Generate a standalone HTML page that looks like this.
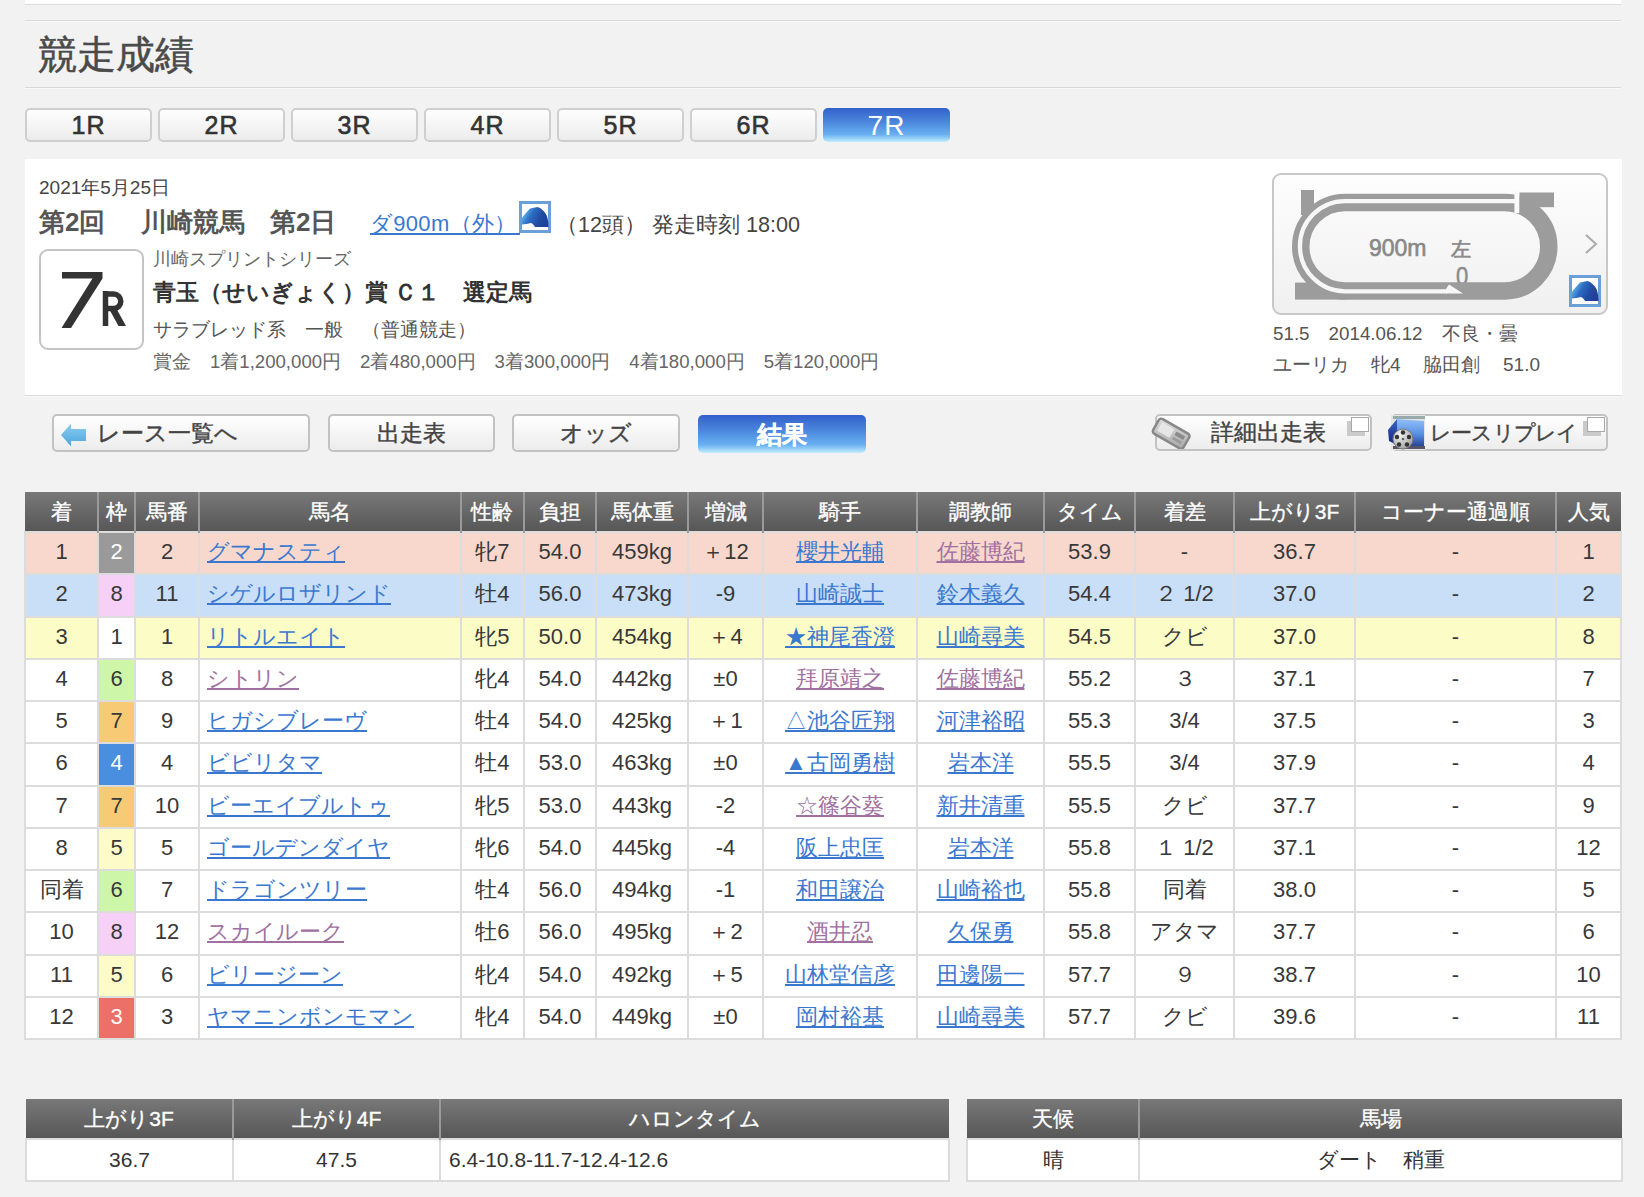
<!DOCTYPE html>
<html lang="ja">
<head>
<meta charset="utf-8">
<style>
*{box-sizing:border-box;margin:0;padding:0}
html,body{width:1644px;height:1197px;overflow:hidden;background:#f2f2f2;font-family:"Liberation Sans",sans-serif;color:#333}
.abs{position:absolute}
a{color:#3a78d0;text-decoration:underline}
a.v{color:#a070a0}
#topstrip{left:25px;top:0;width:1596px;height:5px;background:#fff;border-bottom:1px solid #dcdcdc}
#hdr{left:25px;top:20px;width:1596px;height:68px;border-top:1px solid #d8d8d8;border-bottom:1px solid #d8d8d8;box-shadow:inset 0 1px 0 #fafafa,0 1px 0 #fafafa}
#hdr h1{position:absolute;left:13px;top:10px;font-size:39px;font-weight:normal;color:#4a4a4a;line-height:48px;-webkit-text-stroke:0.5px #4a4a4a}
.rb{position:absolute;top:108px;width:127px;height:34px;border:2px solid #cfcfcf;border-radius:5px;background:linear-gradient(#fefefe,#ececec);font-size:25px;font-weight:normal;color:#333;text-align:center;line-height:31px;-webkit-text-stroke:0.6px #333;letter-spacing:1px}
.rb.on{background:linear-gradient(#3360cc 0%,#4a86dc 40%,#68b0f2 78%,#c4eefc 100%);border:none;color:#fff;font-weight:normal;line-height:35px;-webkit-text-stroke:0}
#panel{left:25px;top:159px;width:1597px;height:237px;background:#fff;border-bottom:1px solid #dcdcdc;box-shadow:0 1px 0 #f8f8f8}

.t{position:absolute;white-space:nowrap}
#date{left:39px;top:175.5px;font-size:19px;color:#444;line-height:24px}
#kai{left:39px;top:205px;font-size:26px;font-weight:bold;color:#555;line-height:34px;width:400px;height:34px}
#kai span{position:absolute;top:0}
#dist{left:370px;top:209px;font-size:22px;line-height:30px}
#dist a{color:#3a78d0}
#tou{left:556px;top:210px;font-size:21.6px;color:#444;line-height:30px}
#box7{left:39px;top:249px;width:105px;height:101px;border:2px solid #c4c4c4;border-radius:9px;background:#fff}
#box7 .n{position:absolute;left:17px;top:9px;font-size:78px;line-height:80px;color:#333;-webkit-text-stroke:1px #333}
#box7 .r{position:absolute;left:62px;top:34px;font-size:47px;line-height:50px;color:#333;transform:scaleX(0.8);transform-origin:0 0;-webkit-text-stroke:0.5px #333}
#series{left:153px;top:246.5px;font-size:18px;color:#666;line-height:24px}
#rname{left:153px;top:276.5px;font-size:23px;font-weight:bold;color:#333;line-height:30px}
#rtype{left:153px;top:317px;font-size:18.7px;color:#555;line-height:26px}
#prize{left:153px;top:349.5px;font-size:18.6px;color:#666;line-height:24px}
#course{left:1272px;top:173px;width:336px;height:142px;border:2px solid #c8c8c8;border-radius:9px;background:linear-gradient(#fdfdfd,#f0f0f0)}
#rec1{left:1273px;top:321px;font-size:18.8px;color:#555;line-height:26px}
#rec2{left:1273px;top:351.5px;font-size:19px;word-spacing:0;color:#555;line-height:26px}

.btn{position:absolute;top:414px;height:38px;border:2px solid #c2c2c2;border-radius:5px;background:linear-gradient(#ffffff,#ececec);font-size:23px;color:#444;text-align:center;line-height:34px;white-space:nowrap;-webkit-text-stroke:0.4px #444}
.btn.on{border:none;top:415px;height:37.5px;background:linear-gradient(#3360cc 0%,#4a86dc 40%,#68b0f2 78%,#c4eefc 100%);color:#fff;font-weight:bold;font-size:25px;line-height:38px;-webkit-text-stroke:0.3px #fff}
.extico{position:absolute;top:1px;width:18px;height:15px;border:1.5px solid #a8a8a8;background:#fff;box-shadow:-4px 4px 0 #cacaca}
table.res{position:absolute;left:24px;top:492px;border-collapse:collapse;table-layout:fixed;width:1596px;font-size:22px;color:#333}
table.res th{height:39px;background:linear-gradient(#787878,#575757);color:#fff;font-weight:normal;border-left:2px solid #9a9a9a;font-size:21px;padding:0;line-height:39px;-webkit-text-stroke:0.35px #fff}
table.res th:first-child{border-left:none}
table.res td{height:42.25px;border:2px solid #dcdcdc;background:#fff;text-align:center;padding:0 0 2px 0;white-space:nowrap;line-height:36px;color:#383838}
table.res td.nm{text-align:left;padding-left:7px;font-size:21.5px}
tr.r1 td{background:#f8d8cd}
tr.r2 td{background:#c9def7}
tr.r3 td{background:#fcfcc7}
table.res tr td.w{color:#333}
.w1{background:#fff !important}
.w2{background:#9a9a9a !important;color:#fff !important}
.w3{background:#ec6f68 !important;color:#fff !important}
.w4{background:#4a8ee0 !important;color:#fff !important}
.w5{background:#fdfcc8 !important}
.w6{background:#cdf6a8 !important}
.w7{background:#f7ca76 !important}
.w8{background:#f6d0f6 !important}

table.sm{position:absolute;top:1099px;border-collapse:collapse;table-layout:fixed;font-size:21px;color:#333}
table.sm th{height:39px;background:linear-gradient(#787878,#575757);color:#fff;font-weight:normal;border-left:2px solid #9a9a9a;padding:0;line-height:39px;-webkit-text-stroke:0.35px #fff}
table.sm th:first-child{border-left:none}
table.sm td{height:42px;border:2px solid #dcdcdc;background:#fff;text-align:center;padding:0;line-height:40px;white-space:nowrap}
</style>
</head>
<body>
<div id="topstrip" class="abs"></div>
<div id="hdr" class="abs"><h1>競走成績</h1></div>
<div class="rb" style="left:25px">1R</div>
<div class="rb" style="left:158px">2R</div>
<div class="rb" style="left:291px">3R</div>
<div class="rb" style="left:424px">4R</div>
<div class="rb" style="left:557px">5R</div>
<div class="rb" style="left:690px">6R</div>
<div class="rb on" style="left:823px;font-size:28px">7R</div>
<div id="panel" class="abs"></div>

<div id="date" class="t">2021年5月25日</div>
<div id="kai" class="t"><span style="left:0">第2回</span><span style="left:102px">川崎競馬</span><span style="left:231px">第2日</span></div>
<div id="dist" class="t"><a style="letter-spacing:0.3px;text-decoration:none">ダ900m（外）</a></div>
<div class="abs" style="left:370px;top:233px;width:150px;height:2px;background:#3a78d0"></div><div class="abs" style="left:519px;top:201px;width:32px;height:32px"><svg width="32" height="32" viewBox="0 0 32 32"><defs><linearGradient id="hg" x1="0" y1="0.3" x2="1" y2="0.7"><stop offset="0" stop-color="#6cc4f0"/><stop offset="0.35" stop-color="#2d6cc4"/><stop offset="0.7" stop-color="#1f4aa0"/><stop offset="1" stop-color="#223e98"/></linearGradient></defs><rect x="1.5" y="1.5" width="29" height="29" fill="#fff" stroke="#6a9fd8" stroke-width="3"/><path d="M2.5 17.5 C5 14, 8 11, 11 7.5 L18.5 6 C22 7, 25.5 10, 27.5 14 C29 18, 29.5 22, 29.5 26 L16 26 C15 24.5, 14 22.5, 12 22 C9 22.5, 6 23.5, 2.5 23.5 Z" fill="url(#hg)"/></svg></div>
<div id="tou" class="t">（12頭）&nbsp;発走時刻 18:00</div>
<div id="box7" class="abs"></div><svg class="abs" style="left:0;top:0" width="200" height="400" viewBox="0 0 200 400"><path d="M62 272 L102.5 272 L102.5 278.5 L71 328 L61.5 328 L92.5 278.5 L62 278.5 Z" fill="#333"/><path d="M105.5 291 V326" stroke="#333" stroke-width="5.5" fill="none"/><path d="M103 294 H113.5 A7.3 7.3 0 0 1 113.5 308.6 H103" stroke="#333" stroke-width="5.5" fill="none"/><path d="M108 307 L115.5 307 L126 326 L118.5 326 Z" fill="#333"/></svg>
<div id="series" class="t">川崎スプリントシリーズ</div>
<div id="rname" class="t">青玉（せいぎょく）賞 Ｃ１　選定馬</div>
<div id="rtype" class="t">サラブレッド系　一般　（普通競走）</div>
<div id="prize" class="t">賞金　1着1,200,000円　2着480,000円　3着300,000円　4着180,000円　5着120,000円</div>
<div id="course" class="abs"></div><svg class="abs" style="left:1272px;top:173px" width="336" height="142" viewBox="1272 173 336 142">
<rect x="1295" y="282.6" width="50" height="17" fill="#9c9c9c"/>
<rect x="1301" y="190" width="13" height="25" fill="#9c9c9c"/>
<rect x="1519.3" y="192.5" width="34.7" height="14.7" fill="#9c9c9c"/>
<text x="1456" y="285" font-size="26" fill="#8a8a8a" stroke="#8a8a8a" stroke-width="0.5" font-family="Liberation Sans" transform="translate(1456 0) scale(0.85 1) translate(-1456 0)">0</text>
<path d="M1345 202.45 L1504.5 202.45 A44.25 44.25 0 0 1 1504.5 290.95 L1345 290.95 A44.25 44.25 0 0 1 1345 202.45 Z" fill="none" stroke="#9c9c9c" stroke-width="17.5"/>
<path d="M1517 201.1 L1345 201.1 A45.1 45.1 0 0 0 1345 291.3 L1447 291.3" fill="none" stroke="#f7f7f7" stroke-width="4.3"/>
<path d="M1446 289 L1449 284.5 L1463 293.6 L1446 293.6 Z" fill="#f7f7f7"/>
<rect x="1514.4" y="190" width="4.9" height="23" fill="#f9f9f9"/>
<text x="1369" y="255.5" font-size="23" fill="#888" stroke="#888" stroke-width="0.6" font-family="Liberation Sans">900m</text>
<text x="1451" y="256" font-size="20" fill="#888" stroke="#888" stroke-width="0.6" font-family="Liberation Sans">左</text>
<path d="M1586 235 L1596 244 L1586 253" fill="none" stroke="#aaa" stroke-width="2"/>
</svg>
<div class="abs" style="left:1569px;top:275px;width:32px;height:32px"><svg width="32" height="32" viewBox="0 0 32 32"><defs><linearGradient id="hg2" x1="0" y1="0.3" x2="1" y2="0.7"><stop offset="0" stop-color="#6cc4f0"/><stop offset="0.35" stop-color="#2d6cc4"/><stop offset="0.7" stop-color="#1f4aa0"/><stop offset="1" stop-color="#223e98"/></linearGradient></defs><rect x="1.5" y="1.5" width="29" height="29" fill="#fff" stroke="#6a9fd8" stroke-width="3"/><path d="M2.5 17.5 C5 14, 8 11, 11 7.5 L18.5 6 C22 7, 25.5 10, 27.5 14 C29 18, 29.5 22, 29.5 26 L16 26 C15 24.5, 14 22.5, 12 22 C9 22.5, 6 23.5, 2.5 23.5 Z" fill="url(#hg2)"/></svg></div>

<div id="rec1" class="t">51.5　2014.06.12　不良・曇</div>
<div id="rec2" class="t" style="width:300px;height:26px"><span class="abs" style="left:0">ユーリカ</span><span class="abs" style="left:98px">牝4</span><span class="abs" style="left:150px">脇田創</span><span class="abs" style="left:230px">51.0</span></div>

<div class="btn" style="left:52px;width:258px;text-align:left;padding-left:43px"><svg class="abs" style="left:6px;top:6px" width="28" height="26" viewBox="0 0 28 26"><defs><linearGradient id="ag" x1="0" y1="0" x2="0" y2="1"><stop offset="0" stop-color="#8ccdf0"/><stop offset="1" stop-color="#4aa6dc"/></linearGradient></defs><path d="M1 13 L11 1.5 L11 7 L26 7 L26 19 L11 19 L11 24.5 Z" fill="url(#ag)"/></svg>レース一覧へ</div>
<div class="btn" style="left:328px;width:167px">出走表</div>
<div class="btn" style="left:512px;width:168px">オッズ</div>
<div class="btn on" style="left:698px;width:168px">結果</div>
<div class="btn" style="left:1155px;width:217px;top:414px;height:37px;text-align:left;padding-left:54px;font-size:22.5px"><svg class="abs" style="left:-6px;top:1px" width="44" height="32" viewBox="0 0 44 32"><defs><linearGradient id="ng" x1="0" y1="0" x2="1" y2="1"><stop offset="0" stop-color="#dedede"/><stop offset="1" stop-color="#a8a8a8"/></linearGradient></defs><g transform="rotate(30 20 16)"><rect x="3" y="8" width="35" height="17" rx="3" fill="url(#ng)" stroke="#888" stroke-width="2.5"/><rect x="7" y="11" width="14" height="10" fill="#e6e6e6"/><rect x="24" y="12" width="10" height="4" fill="#8a8a8a"/><rect x="24" y="18" width="10" height="3" fill="#9a9a9a"/></g></svg>詳細出走表<span class="extico" style="left:194px"></span></div>
<div class="btn" style="left:1391px;width:217px;top:414px;height:37px;text-align:left;padding-left:37px;font-size:20.5px;letter-spacing:-0.8px"><svg class="abs" style="left:-6px;top:-2px" width="40" height="38" viewBox="0 0 40 38"><defs><linearGradient id="fg" x1="0" y1="0" x2="0" y2="1"><stop offset="0" stop-color="#90c0f8"/><stop offset="0.55" stop-color="#5a90e4"/><stop offset="1" stop-color="#26449a"/></linearGradient><linearGradient id="fg2" x1="0" y1="0" x2="0" y2="1"><stop offset="0" stop-color="#3a64c8"/><stop offset="1" stop-color="#16247a"/></linearGradient><radialGradient id="rg" cx="0.35" cy="0.3" r="0.8"><stop offset="0" stop-color="#f4f4f4"/><stop offset="1" stop-color="#9a9a9a"/></radialGradient></defs><rect x="4" y="1" width="34" height="35" fill="#e4e4e4"/><rect x="6" y="2" width="32" height="3" fill="#9aa"/><rect x="6" y="32" width="32" height="3" fill="#556"/><path d="M10 5 L37 7 L37 32 L10 32 Z" fill="url(#fg)"/><path d="M1 16 L10 5 L10 31 L2 27 Z" fill="url(#fg2)"/><circle cx="16" cy="25" r="10" fill="url(#rg)" stroke="#777" stroke-width="1"/><circle cx="16" cy="18.5" r="2.2" fill="#333"/><circle cx="22" cy="23" r="2.2" fill="#333"/><circle cx="20" cy="30.5" r="2.2" fill="#333"/><circle cx="12" cy="30.5" r="2.2" fill="#333"/><circle cx="10" cy="23" r="2.2" fill="#333"/><circle cx="16" cy="25" r="1.3" fill="#666"/></svg>レースリプレイ<span class="extico" style="left:194px"></span></div>
<table class="res"><colgroup><col style="width:73px"><col style="width:37px"><col style="width:64px"><col style="width:261.5px"><col style="width:63.5px"><col style="width:72px"><col style="width:92px"><col style="width:75px"><col style="width:154px"><col style="width:127px"><col style="width:91px"><col style="width:99px"><col style="width:121px"><col style="width:201px"><col style="width:65px"></colgroup><tr><th>着</th><th>枠</th><th>馬番</th><th>馬名</th><th>性齢</th><th>負担</th><th>馬体重</th><th>増減</th><th>騎手</th><th>調教師</th><th>タイム</th><th>着差</th><th>上がり3F</th><th>コーナー通過順</th><th>人気</th></tr>
<tr class="r1"><td>1</td><td class="w2">2</td><td>2</td><td class="nm"><a class="">グマナスティ</a></td><td>牝7</td><td>54.0</td><td>459kg</td><td>＋12</td><td><a class="">櫻井光輔</a></td><td><a class="v">佐藤博紀</a></td><td>53.9</td><td>-</td><td>36.7</td><td>-</td><td>1</td></tr>
<tr class="r2"><td>2</td><td class="w8">8</td><td>11</td><td class="nm"><a class="">シゲルロザリンド</a></td><td>牡4</td><td>56.0</td><td>473kg</td><td>-9</td><td><a class="">山崎誠士</a></td><td><a class="">鈴木義久</a></td><td>54.4</td><td>２ 1/2</td><td>37.0</td><td>-</td><td>2</td></tr>
<tr class="r3"><td>3</td><td class="w1">1</td><td>1</td><td class="nm"><a class="">リトルエイト</a></td><td>牝5</td><td>50.0</td><td>454kg</td><td>＋4</td><td><a class="">★神尾香澄</a></td><td><a class="">山崎尋美</a></td><td>54.5</td><td>クビ</td><td>37.0</td><td>-</td><td>8</td></tr>
<tr class=""><td>4</td><td class="w6">6</td><td>8</td><td class="nm"><a class="v">シトリン</a></td><td>牝4</td><td>54.0</td><td>442kg</td><td>±0</td><td><a class="v">拜原靖之</a></td><td><a class="v">佐藤博紀</a></td><td>55.2</td><td>３</td><td>37.1</td><td>-</td><td>7</td></tr>
<tr class=""><td>5</td><td class="w7">7</td><td>9</td><td class="nm"><a class="">ヒガシブレーヴ</a></td><td>牡4</td><td>54.0</td><td>425kg</td><td>＋1</td><td><a class="">△池谷匠翔</a></td><td><a class="">河津裕昭</a></td><td>55.3</td><td>3/4</td><td>37.5</td><td>-</td><td>3</td></tr>
<tr class=""><td>6</td><td class="w4">4</td><td>4</td><td class="nm"><a class="">ビビリタマ</a></td><td>牡4</td><td>53.0</td><td>463kg</td><td>±0</td><td><a class="">▲古岡勇樹</a></td><td><a class="">岩本洋</a></td><td>55.5</td><td>3/4</td><td>37.9</td><td>-</td><td>4</td></tr>
<tr class=""><td>7</td><td class="w7">7</td><td>10</td><td class="nm"><a class="">ビーエイブルトゥ</a></td><td>牝5</td><td>53.0</td><td>443kg</td><td>-2</td><td><a class="v">☆篠谷葵</a></td><td><a class="">新井清重</a></td><td>55.5</td><td>クビ</td><td>37.7</td><td>-</td><td>9</td></tr>
<tr class=""><td>8</td><td class="w5">5</td><td>5</td><td class="nm"><a class="">ゴールデンダイヤ</a></td><td>牝6</td><td>54.0</td><td>445kg</td><td>-4</td><td><a class="">阪上忠匡</a></td><td><a class="">岩本洋</a></td><td>55.8</td><td>１ 1/2</td><td>37.1</td><td>-</td><td>12</td></tr>
<tr class=""><td>同着</td><td class="w6">6</td><td>7</td><td class="nm"><a class="">ドラゴンツリー</a></td><td>牡4</td><td>56.0</td><td>494kg</td><td>-1</td><td><a class="">和田譲治</a></td><td><a class="">山崎裕也</a></td><td>55.8</td><td>同着</td><td>38.0</td><td>-</td><td>5</td></tr>
<tr class=""><td>10</td><td class="w8">8</td><td>12</td><td class="nm"><a class="v">スカイルーク</a></td><td>牡6</td><td>56.0</td><td>495kg</td><td>＋2</td><td><a class="v">酒井忍</a></td><td><a class="">久保勇</a></td><td>55.8</td><td>アタマ</td><td>37.7</td><td>-</td><td>6</td></tr>
<tr class=""><td>11</td><td class="w5">5</td><td>6</td><td class="nm"><a class="">ビリージーン</a></td><td>牝4</td><td>54.0</td><td>492kg</td><td>＋5</td><td><a class="">山林堂信彦</a></td><td><a class="">田邊陽一</a></td><td>57.7</td><td>９</td><td>38.7</td><td>-</td><td>10</td></tr>
<tr class=""><td>12</td><td class="w3">3</td><td>3</td><td class="nm"><a class="">ヤマニンボンモマン</a></td><td>牝4</td><td>54.0</td><td>449kg</td><td>±0</td><td><a class="">岡村裕基</a></td><td><a class="">山崎尋美</a></td><td>57.7</td><td>クビ</td><td>39.6</td><td>-</td><td>11</td></tr>
</table>

<table class="sm" style="left:25px;width:923px"><colgroup><col style="width:207px"><col style="width:207px"><col style="width:509px"></colgroup>
<tr><th>上がり3F</th><th>上がり4F</th><th>ハロンタイム</th></tr>
<tr><td>36.7</td><td>47.5</td><td style="text-align:left;padding-left:8px">6.4-10.8-11.7-12.4-12.6</td></tr></table>
<table class="sm" style="left:966px;width:655px"><colgroup><col style="width:172px"><col style="width:483px"></colgroup>
<tr><th>天候</th><th>馬場</th></tr>
<tr><td>晴</td><td>ダート　稍重</td></tr></table>
</body>
</html>
